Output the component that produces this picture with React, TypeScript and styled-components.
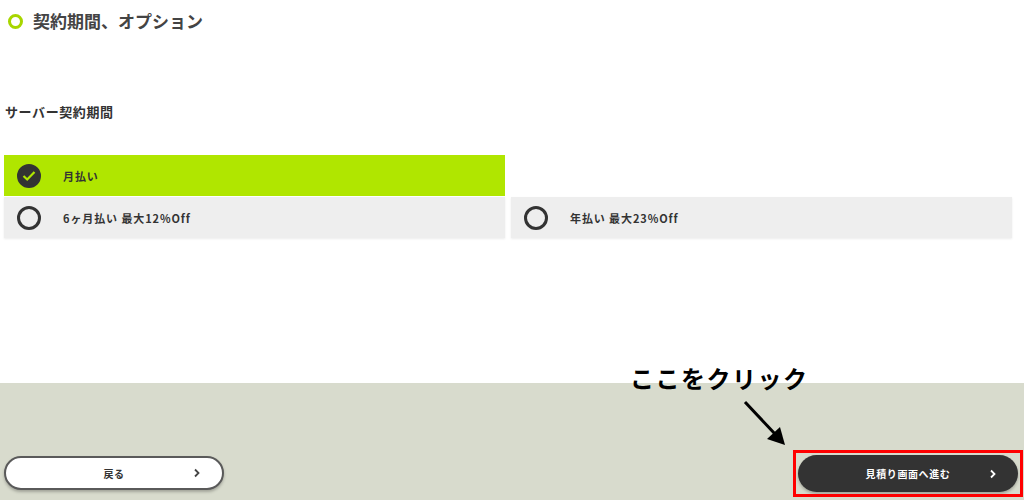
import styled, { createGlobalStyle } from 'styled-components';

const GlobalStyle = createGlobalStyle`
  body {
    margin: 0;
    font-family: "Noto Sans CJK JP", "Noto Sans", sans-serif;
    background: #fff;
    color: #333;
  }
`;

type Plan = {
  id: string;
  label: string;
  checked: boolean;
  column: number;
  row: number;
};

const plans: Plan[] = [
  { id: 'monthly', label: '月払い', checked: true, column: 1, row: 1 },
  { id: 'half', label: '6ヶ月払い 最大12%Off', checked: false, column: 1, row: 2 },
  { id: 'yearly', label: '年払い 最大23%Off', checked: false, column: 2, row: 2 },
];

const Page = styled.div`
  width: 1024px;
  height: 500px;
  display: flex;
  flex-direction: column;
  overflow: hidden;
`;

const Main = styled.main`
  height: 383px;
  padding: 0 11px 0 4px;
  box-sizing: border-box;
`;

const Title = styled.h1`
  margin: 10px 0 0 4px;
  height: 22px;
  display: flex;
  align-items: center;
  gap: 10px;
  font-size: 17px;
  font-weight: 700;
  color: #444;
  line-height: 22px;
`;

const TitleDot = styled.span`
  width: 9px;
  height: 9px;
  border: 3px solid #a8d600;
  border-radius: 50%;
  flex-shrink: 0;
`;

const SubHeading = styled.h2`
  margin: 70px 0 0 1px;
  font-size: 13px;
  font-weight: 700;
  letter-spacing: 0.6px;
  color: #333;
  line-height: 20px;
`;

const PlanGrid = styled.div`
  margin-top: 33px;
  display: grid;
  grid-template-columns: 501px 501px;
  grid-auto-rows: 41px;
  column-gap: 6px;
  row-gap: 1px;
`;

const PlanItem = styled.div<{ $checked: boolean }>`
  display: flex;
  align-items: center;
  gap: 22px;
  padding-left: 13px;
  background: ${p => (p.$checked ? '#b0e600' : '#eeeeee')};
  box-shadow: ${p => (p.$checked ? 'none' : '0 1px 2px rgba(0, 0, 0, 0.08)')};
  font-size: 11px;
  font-weight: 700;
  letter-spacing: 0.9px;
  color: #333;
`;

const Radio = styled.span<{ $checked: boolean }>`
  width: 24px;
  height: 24px;
  border-radius: 50%;
  box-sizing: border-box;
  border: 3px solid #333;
  background: ${p => (p.$checked ? '#333' : 'transparent')};
  display: flex;
  align-items: center;
  justify-content: center;
  flex-shrink: 0;
`;

const Footer = styled.footer`
  position: relative;
  flex: 1;
  background: #d8dbcd;
  display: flex;
  justify-content: space-between;
  align-items: flex-start;
  padding: 72px 6px 0 4px;
`;

const PillButton = styled.button<{ $dark?: boolean }>`
  width: 220px;
  height: ${p => (p.$dark ? '37px' : '34px')};
  margin-top: ${p => (p.$dark ? '0' : '1px')};
  border-radius: 20px;
  box-sizing: border-box;
  border: ${p => (p.$dark ? 'none' : '2px solid #5a5a5a')};
  background: ${p => (p.$dark ? '#333' : '#fff')};
  color: ${p => (p.$dark ? '#fff' : '#333')};
  box-shadow: 0 2px 3px rgba(0, 0, 0, 0.25);
  display: grid;
  grid-template-columns: 1fr auto 1fr;
  align-items: center;
  padding: 0 21px;
  font-family: inherit;
  font-size: 10px;
  font-weight: 700;
  letter-spacing: 0.6px;
  cursor: pointer;

  svg {
    grid-column: 3;
    justify-self: end;
  }
`;

const Highlight = styled.div`
  outline: 3px solid #ff0000;
  outline-offset: 2px;
`;

const ButtonLabel = styled.span`
  grid-column: 2;
`;

const Callout = styled.div`
  position: absolute;
  left: 630px;
  top: -18px;
  font-size: 24px;
  font-weight: 700;
  letter-spacing: 1.5px;
  color: #000;
  line-height: 26px;
`;

const Arrow = styled.svg`
  position: absolute;
  left: 740px;
  top: 16px;
`;

const Chevron = ({ color }: { color: string }) => (
  <svg width="8" height="10" viewBox="0 0 8 10">
    <path d="M2 1.5 L5.5 5 L2 8.5" fill="none" stroke={color} strokeWidth="1.8" />
  </svg>
);

const App = () => {
  return (
    <>
      <GlobalStyle />
      <Page>
        <Main>
          <Title>
            <TitleDot />
            契約期間、オプション
          </Title>
          <SubHeading>サーバー契約期間</SubHeading>
          <PlanGrid>
            {plans.map(plan => (
              <PlanItem
                key={plan.id}
                $checked={plan.checked}
                style={{ gridColumn: plan.column, gridRow: plan.row }}
              >
                <Radio $checked={plan.checked}>
                  {plan.checked && (
                    <svg width="14" height="12" viewBox="0 0 14 12">
                      <path d="M1.5 6 L5.2 9.5 L12.5 2" fill="none" stroke="#b0e600" strokeWidth="2.2" />
                    </svg>
                  )}
                </Radio>
                {plan.label}
              </PlanItem>
            ))}
          </PlanGrid>
        </Main>
        <Footer>
          <PillButton>
            <ButtonLabel>戻る</ButtonLabel>
            <Chevron color="#444" />
          </PillButton>
          <Highlight>
            <PillButton $dark>
              <ButtonLabel>見積り画面へ進む</ButtonLabel>
              <Chevron color="#fff" />
            </PillButton>
          </Highlight>
          <Callout>ここをクリック</Callout>
          <Arrow width="50" height="50" viewBox="0 0 50 50">
            <line x1="5" y1="3" x2="36" y2="36" stroke="#000" strokeWidth="3" />
            <polygon points="45,46 27,40 40,28" fill="#000" />
          </Arrow>
        </Footer>
      </Page>
    </>
  );
};

export default App;
